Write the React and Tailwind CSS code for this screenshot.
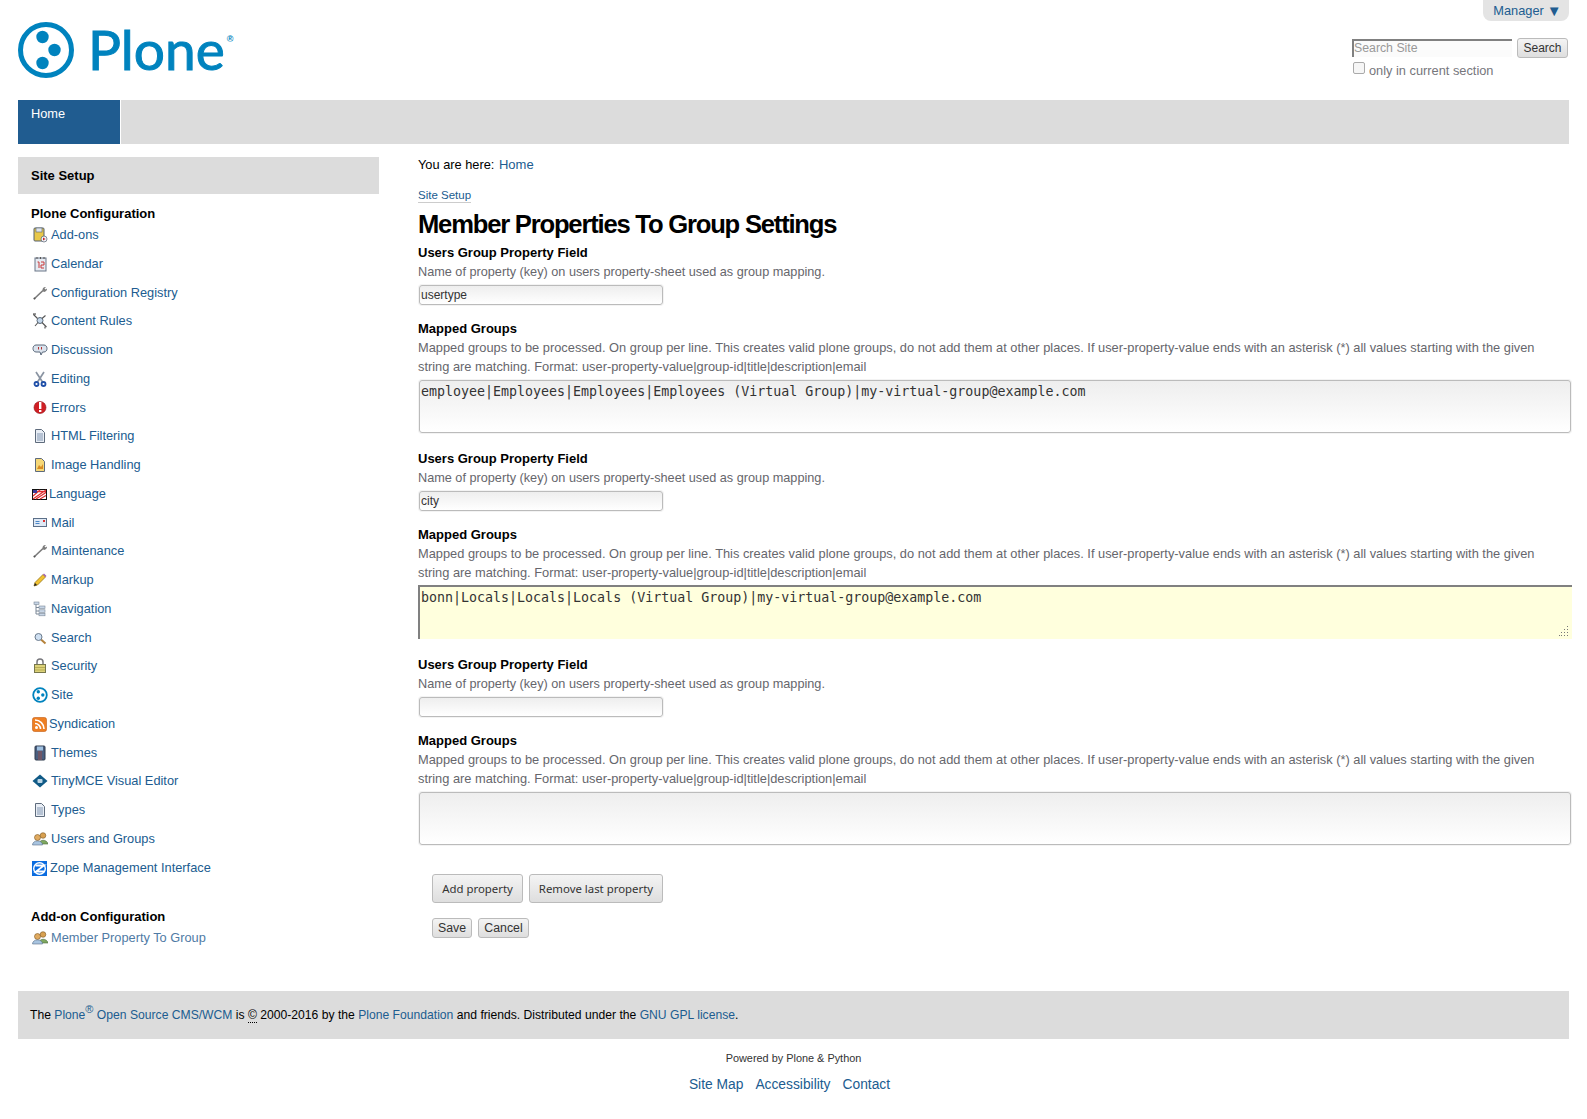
import React from "react";

const sans = "font-['Liberation_Sans',Arial,sans-serif]";

function Icon({ name }) {
  switch (name) {
    case "addons":
      return (
        <svg viewBox="0 0 16 16" className="h-4 w-4">
          <rect x="2" y="1" width="10" height="13" rx="1" fill="#e8c84a" stroke="#55606e" />
          <rect x="4" y="1" width="6" height="4" fill="#dfe5ec" stroke="#55606e" strokeWidth=".6" />
          <circle cx="12" cy="12" r="3" fill="#eef2f7" stroke="#55606e" strokeWidth=".7" />
          <path d="M11 10.500l2.500 1.500-2.500 1.500z" fill="#c8202a" />
        </svg>
      );
    case "calendar":
      return (
        <svg viewBox="0 0 16 16" className="h-4 w-4">
          <rect x="3" y="2" width="11" height="13" fill="#e6ebf2" stroke="#6a7688" />
          <path d="M5 1v2M8.500 1v2M12 1v2" stroke="#555" />
          <path d="M5.500 6h1.500v6M9 6h3v3h-3v3h3" fill="none" stroke="#c93a3a" />
        </svg>
      );
    case "wrench":
      return (
        <svg viewBox="0 0 16 16" className="h-4 w-4">
          <path d="M2 14L11 5.500" stroke="#7a7a7a" strokeWidth="1.600" />
          <path d="M10.500 5.500c-.5-2 1.500-4 3.500-3.500l-1.500 1.500 1 1 1.500-1c.3 2-1.500 3.800-3.500 3.300z" fill="#7c7c7c" />
          <circle cx="2.500" cy="13.500" r="1" fill="#555" />
        </svg>
      );
    case "rules":
      return (
        <svg viewBox="0 0 16 16" className="h-4 w-4">
          <circle cx="8" cy="7.500" r="3" fill="#c3d6ea" stroke="#5a6a7a" />
          <path d="M1.500 1.500l4 4M14.500 14l-4.500-4.500M13.500 2.500l-3.500 3M3 13l3-3.500" stroke="#555" strokeWidth="1.100" />
          <path d="M1 1h3M13 13.500v2" stroke="#333" />
        </svg>
      );
    case "discussion":
      return (
        <svg viewBox="0 0 16 16" className="h-4 w-4">
          <path d="M4 3h8c4 0 4 7 0 7h-1.500l-1.500 3-1-3H4c-4 0-4-7 0-7z" fill="#dbe3ed" stroke="#5c6a7c" />
          <path d="M6.500 5v2.500M9.500 5v2.500" stroke="#b03030" />
        </svg>
      );
    case "editing":
      return (
        <svg viewBox="0 0 16 16" className="h-4 w-4">
          <path d="M4 1l6.500 10M12 1L5.500 11" stroke="#8a94a2" strokeWidth="1.700" />
          <circle cx="4.500" cy="13" r="2" fill="none" stroke="#1f4fa8" strokeWidth="1.800" />
          <circle cx="11.500" cy="13" r="2" fill="none" stroke="#1f4fa8" strokeWidth="1.800" />
        </svg>
      );
    case "errors":
      return (
        <svg viewBox="0 0 16 16" className="h-4 w-4">
          <circle cx="8" cy="7.500" r="6" fill="#d01f24" stroke="#8e1015" strokeWidth=".6" />
          <rect x="7" y="2" width="2.400" height="7" fill="#fff" />
          <rect x="7" y="10" width="2.400" height="2" fill="#fff" />
        </svg>
      );
    case "doc":
      return (
        <svg viewBox="0 0 16 16" className="h-4 w-4">
          <path d="M3.500 1.500h6l3 3v10h-9z" fill="#e9eef5" stroke="#5e6b7c" />
          <path d="M5 6h6M5 8h6M5 10h6M5 12h6" stroke="#8397b2" />
        </svg>
      );
    case "image":
      return (
        <svg viewBox="0 0 16 16" className="h-4 w-4">
          <path d="M3.500 1.500h6l3 3v10h-9z" fill="#f6d878" stroke="#5e6b7c" />
          <path d="M5 12l2-4 2 2 2-3v5z" fill="#d88c24" />
        </svg>
      );
    case "language":
      return (
        <svg viewBox="0 0 16 16" className="h-4 w-4">
          <rect x=".5" y="3.500" width="14" height="10" fill="#fff" stroke="#111" />
          <path d="M1 13L14 4M1 5.500h13M4 13l10-6.500M8 13l6-3.500M1 10l7-6" stroke="#e03030" strokeWidth="1.300" />
          <rect x="1" y="4" width="4" height="3" fill="#3a3a98" />
        </svg>
      );
    case "mail":
      return (
        <svg viewBox="0 0 16 16" className="h-4 w-4">
          <rect x="1.500" y="3.500" width="13" height="8" fill="#dfe9f5" stroke="#5c6f88" />
          <path d="M3.500 6.500h4M3.500 8.500h4" stroke="#4a86c8" />
          <rect x="11" y="5" width="2" height="2" fill="#e03030" />
        </svg>
      );
    case "markup":
      return (
        <svg viewBox="0 0 16 16" className="h-4 w-4">
          <path d="M2 14l1-3.500 8-8 2.500 2.500-8 8z" fill="#f2c230" stroke="#8a6a10" strokeWidth=".7" />
          <path d="M11 2.500l2.500 2.500 1-1-2.500-2.500z" fill="#a05fb0" />
          <path d="M2 14l1-3 2 2z" fill="#222" />
        </svg>
      );
    case "navigation":
      return (
        <svg viewBox="0 0 16 16" className="h-4 w-4">
          <path d="M4 3v10h3M4 6.500h3M4 10h3" fill="none" stroke="#7a8796" />
          <rect x="2" y="1" width="5" height="2.500" fill="#c7d5e6" stroke="#7a8796" strokeWidth=".6" />
          <rect x="7" y="5" width="6" height="2.500" fill="#c7d5e6" stroke="#7a8796" strokeWidth=".6" />
          <rect x="7" y="8.800" width="6" height="2.500" fill="#c7d5e6" stroke="#7a8796" strokeWidth=".6" />
          <rect x="7" y="12.300" width="6" height="2.500" fill="#c7d5e6" stroke="#7a8796" strokeWidth=".6" />
        </svg>
      );
    case "search":
      return (
        <svg viewBox="0 0 16 16" className="h-4 w-4">
          <path d="M9 9.500l4.500 4" stroke="#b5823a" strokeWidth="2" />
          <circle cx="6.500" cy="7" r="3.500" fill="#cfe0f2" stroke="#6a7a8c" />
        </svg>
      );
    case "security":
      return (
        <svg viewBox="0 0 16 16" className="h-4 w-4">
          <path d="M5 7V4a3 3 0 0 1 6 0V7" fill="none" stroke="#77777c" strokeWidth="1.500" />
          <rect x="2.500" y="6.500" width="11" height="8" fill="#dcd27a" stroke="#77774c" />
          <path d="M3 9.500h10M3 12h10" stroke="#b8ad55" />
        </svg>
      );
    case "site":
      return (
        <svg viewBox="0 0 16 16" className="h-4 w-4">
          <circle cx="8" cy="8" r="6.800" fill="none" stroke="#0083be" strokeWidth="1.800" />
          <circle cx="6.300" cy="4.800" r="1.700" fill="#0083be" />
          <circle cx="10.800" cy="8" r="1.700" fill="#0083be" />
          <circle cx="6.300" cy="11.200" r="1.700" fill="#0083be" />
        </svg>
      );
    case "rss":
      return (
        <svg viewBox="0 0 16 16" className="h-4 w-4">
          <rect x=".5" y="1.500" width="14" height="14" rx="2" fill="#ee7f22" stroke="#c25a10" strokeWidth=".6" />
          <circle cx="4.500" cy="11.500" r="1.500" fill="#fff" />
          <path d="M3 7.500a5.500 5.500 0 0 1 5.500 5.500M3 4a9 9 0 0 1 9 9" fill="none" stroke="#fff" strokeWidth="1.600" />
        </svg>
      );
    case "themes":
      return (
        <svg viewBox="0 0 16 16" className="h-4 w-4">
          <rect x="3" y="1" width="10" height="14" rx="1" fill="#4a5f80" stroke="#2f3a4c" />
          <rect x="5" y="1.500" width="6" height="4" fill="#9fc0e0" />
          <rect x="6" y="6" width="4" height="9" fill="#6e5666" />
        </svg>
      );
    case "tiny":
      return (
        <svg viewBox="0 0 16 16" className="h-4 w-4">
          <path d="M8 1.500L15.500 8 8 14.500.5 8z" fill="#105a86" />
          <rect x="5.500" y="6" width="5" height="4" rx="1" fill="#bcd6e6" />
        </svg>
      );
    case "users":
      return (
        <svg viewBox="0 0 16 16" className="h-4 w-4">
          <circle cx="11" cy="4.500" r="2.800" fill="#d8a050" stroke="#7a5520" strokeWidth=".6" />
          <path d="M7 13c0-5 8-5 9 0z" fill="#7fa860" stroke="#4a6a3a" strokeWidth=".6" />
          <circle cx="5.500" cy="6.500" r="3" fill="#e0aa60" stroke="#7a5520" strokeWidth=".6" />
          <path d="M.5 14c0-5.500 10-5.500 10 0z" fill="#a8c4e0" stroke="#5a7088" strokeWidth=".6" />
        </svg>
      );
    case "zope":
      return (
        <svg viewBox="0 0 16 16" className="h-4 w-4">
          <rect y="1" width="15" height="15" fill="#0a6ce0" />
          <circle cx="7.500" cy="8.500" r="5.800" fill="none" stroke="#fff" strokeWidth="1.400" />
          <path d="M3.500 5.500h8.500L4 11.500h8.500" fill="none" stroke="#fff" strokeWidth="1.800" />
        </svg>
      );
    default:
      return null;
  }
}

const configItems = [
  { label: "Add-ons", icon: "addons" },
  { label: "Calendar", icon: "calendar" },
  { label: "Configuration Registry", icon: "wrench" },
  { label: "Content Rules", icon: "rules" },
  { label: "Discussion", icon: "discussion" },
  { label: "Editing", icon: "editing", gap: "gap-[3px]" },
  { label: "Errors", icon: "errors" },
  { label: "HTML Filtering", icon: "doc" },
  { label: "Image Handling", icon: "image" },
  { label: "Language", icon: "language", gap: "gap-[1px]" },
  { label: "Mail", icon: "mail" },
  { label: "Maintenance", icon: "wrench" },
  { label: "Markup", icon: "markup" },
  { label: "Navigation", icon: "navigation" },
  { label: "Search", icon: "search" },
  { label: "Security", icon: "security" },
  { label: "Site", icon: "site" },
  { label: "Syndication", icon: "rss", gap: "gap-[1px]" },
  { label: "Themes", icon: "themes" },
  { label: "TinyMCE Visual Editor", icon: "tiny" },
  { label: "Types", icon: "doc" },
  { label: "Users and Groups", icon: "users" },
  { label: "Zope Management Interface", icon: "zope", gap: "gap-[2px]" },
];

const mappedHelp =
  "Mapped groups to be processed. On group per line. This creates valid plone groups, do not add them at other places. If user-property-value ends with an asterisk (*) all values starting with the given string are matching. Format: user-property-value|group-id|title|description|email";

const groups = [
  { field: "usertype", mapped: "employee|Employees|Employees|Employees (Virtual Group)|my-virtual-group@example.com" },
  { field: "city", mapped: "bonn|Locals|Locals|Locals (Virtual Group)|my-virtual-group@example.com", focused: true },
  { field: "", mapped: "" },
];

function SideLink({ item }) {
  return (
    <li className={`flex h-[28.760px] items-start ${item.gap || "gap-[3px]"} pl-[15px] text-[12.800px] leading-[15px] text-[#205c90]`}>
      <Icon name={item.icon} />
      <a href="#">{item.label}</a>
    </li>
  );
}

function GroupFields({ group }) {
  const inputBox =
    "block rounded-[3px] border border-[#bbb] bg-gradient-to-b from-[#eeeeee] to-white text-[#333] shadow-[0_0_0_1px_#f3f3f3] outline-none";
  return (
    <div className="mb-[16px]">
      <div className="text-[13px] font-bold leading-[19px] text-black">Users Group Property Field</div>
      <div className="pt-[1px] text-[12.700px] leading-[18px] text-[#66666c]">Name of property (key) on users property-sheet used as group mapping.</div>
      <input
        readOnly
        value={group.field}
        className={`${inputBox} mx-[1px] mt-[4px] mb-[14px] h-[20px] w-[244px] px-[1px] text-[12px] leading-[18px] ${sans}`}
      />
      <div className="text-[13px] font-bold leading-[19px] text-black">Mapped Groups</div>
      <div className="w-[1140px] text-[12.840px] leading-[19px] text-[#66666c]">{mappedHelp}</div>
      <div className={`relative ${group.focused ? "mt-[3px] mb-[1px]" : "mt-[4px]"}`}>
        <textarea
          readOnly
          value={group.mapped}
          className={
            group.focused
              ? "block h-[54px] w-[1154px] resize-none border-t-2 border-l-2 border-[#808080] bg-[#ffffdd] pt-[3px] pl-[1px] font-['DejaVu_Sans_Mono',monospace] text-[13.300px] leading-[16px] text-[#333] outline-none"
              : `${inputBox} ml-[1px] h-[53px] w-[1152px] resize-none px-[1px] pt-[3px] font-['DejaVu_Sans_Mono',monospace] text-[13.300px] leading-[16px]`
          }
        />
        {group.focused && (
          <svg viewBox="0 0 10 10" className="absolute right-[3px] bottom-[3px] h-[10px] w-[10px]" fill="#777">
            <rect x="8" y="0" width="1" height="1" />
            <rect x="5" y="3" width="1" height="1" />
            <rect x="8" y="3" width="1" height="1" />
            <rect x="2" y="6" width="1" height="1" />
            <rect x="5" y="6" width="1" height="1" />
            <rect x="8" y="6" width="1" height="1" />
            <rect x="0" y="9" width="1" height="1" />
            <rect x="2" y="9" width="1" height="1" />
            <rect x="5" y="9" width="1" height="1" />
            <rect x="8" y="9" width="1" height="1" />
          </svg>
        )}
      </div>
    </div>
  );
}

export default function App() {
  const btn =
    "rounded-[3px] border border-[#bbb] bg-gradient-to-b from-[#f4f4f4] to-[#dedede] text-[#333]";
  return (
    <div className={`relative h-[1119px] overflow-hidden bg-white px-[18px] ${sans}`}>
      {/* Header */}
      <header className="relative h-[100px]">
        <a href="#" className="absolute top-0 right-0 flex h-[21px] w-[86px] items-center justify-center gap-[3px] rounded-b-lg bg-[#e4e4e4] pt-[1px] pl-[3px] text-[12.800px] text-[#205c90]">
          Manager <span className="-mt-[2px] text-[15px] leading-[15px]">▼</span>
        </a>
        <div className="flex items-start pt-[22px]">
          <svg viewBox="0 0 56 56" className="h-[56px] w-[56px]">
            <circle cx="28" cy="28" r="25.500" fill="none" stroke="#0083be" strokeWidth="5" />
            <circle cx="24.500" cy="15" r="6.200" fill="#0083be" />
            <circle cx="36.500" cy="28" r="6.200" fill="#0083be" />
            <circle cx="24.500" cy="41" r="6.200" fill="#0083be" />
          </svg>
          <span className="ml-[14px] -mt-[11px] font-['Lato',sans-serif] text-[55px] leading-[76px] text-[#0083be] [-webkit-text-stroke:1px_#0083be]">Plone</span>
          <span className="ml-[2px] mt-[12px] text-[9px] font-bold leading-[10px] text-[#0083be]">®</span>
        </div>
        <div className="absolute top-[38px] right-0 w-[217px]">
          <div className="flex items-start">
            <input
              readOnly
              placeholder="Search Site"
              className="mt-[1px] h-[18px] w-[160px] border-t-2 border-l-2 border-[#808080] bg-[#fbfbfb] pb-[1px] text-[12.300px] outline-none placeholder:text-[#999]"
            />
            <button className={`ml-[5px] h-[20px] w-[51px] text-[12px] ${btn}`}>Search</button>
          </div>
          <label className="mt-[4px] flex items-start text-[12.800px] leading-[16px] text-[#76767c]">
            <span className="ml-[1px] h-[12px] w-[12px] rounded-[2px] border border-[#aaa] bg-[#f6f6f6]"></span>
            <span className="ml-[4px] mt-[1px]">only in current section</span>
          </label>
        </div>
      </header>

      {/* Global nav */}
      <nav className="flex h-[44px] bg-[#dcdcdc]">
        <a href="#" className="w-[102px] bg-[#205c90] pt-[5px] pl-[13px] text-[12.800px] leading-[17px] text-white">Home</a>
        <div className="w-[1px] bg-white"></div>
      </nav>

      <div className="mt-[13px] flex h-[834px] items-start">
        {/* Sidebar */}
        <aside className="w-[361px] shrink-0">
          <div className="h-[37px] bg-[#dcdcdc] pl-[13px] text-[13px] font-bold leading-[37px] text-black">Site Setup</div>
          <div className="mt-[12px] pl-[13px] text-[13px] font-bold leading-[15px] text-black">Plone Configuration</div>
          <ul className="mt-[6px] -ml-[1px]">
            {configItems.map((item) => (
              <SideLink key={item.label} item={item} />
            ))}
          </ul>
          <div className="mt-[21px] pl-[13px] text-[13px] font-bold leading-[15px] text-black">Add-on Configuration</div>
          <div className="mt-[6px] -ml-[1px] flex items-start gap-[3px] pl-[15px] text-[12.800px] leading-[15px] text-[#4f7ba5]">
            <Icon name="users" />
            <a href="#">Member Property To Group</a>
          </div>
        </aside>

        {/* Content */}
        <main className="ml-[39px] w-[1154px] shrink-0">
          <div className="text-[12.800px] leading-[15px] text-black">
            You are here: <a href="#" className="ml-[1px] text-[13px] text-[#205c90]">Home</a>
          </div>
          <a href="#" className="mt-[16px] inline-block border-b border-[#ccc] text-[11.500px] leading-[14px] text-[#205c90]">Site Setup</a>
          <h1 className="mt-[2px] text-[25.600px] font-bold leading-[33px] tracking-[-1.200px] text-black">Member Properties To Group Settings</h1>
          <div className="mt-[2px]">
            {groups.map((g, i) => (
              <GroupFields key={i} group={g} />
            ))}
          </div>
          <div className="ml-[14px] mt-[29px] flex gap-[6px] font-['Noto_Sans',sans-serif] text-[11.400px]">
            <button className={`h-[29px] w-[91px] ${btn}`}>Add property</button>
            <button className={`h-[29px] w-[134px] ${btn}`}>Remove last property</button>
          </div>
          <div className="ml-[14px] mt-[15px] flex gap-[6px] text-[12.300px]">
            <button className={`h-[20px] w-[40px] ${btn}`}>Save</button>
            <button className={`h-[20px] w-[51px] ${btn}`}>Cancel</button>
          </div>
        </main>
      </div>

      {/* Footer */}
      <footer>
        <div className="flex h-[48px] items-center bg-[#dcdcdc] pl-[12px] text-[12.150px] text-black">
          <span>
            The <a href="#" className="text-[#205c90]">Plone<sup className="text-[11px]">®</sup> Open Source CMS/WCM</a> is <abbr className="border-b border-dotted border-black no-underline">©</abbr> 2000-2016 by the <a href="#" className="text-[#205c90]">Plone Foundation</a> and friends. Distributed under the <a href="#" className="text-[#205c90]">GNU GPL license</a>.
          </span>
        </div>
        <div className="mt-[12px] text-center text-[10.900px] leading-[14px] text-[#333]">Powered by Plone &amp; Python</div>
        <div className="mt-[12px] flex justify-center gap-[12px] pr-[8px] text-[13.800px] leading-[16px] text-[#205c90]">
          <a href="#">Site Map</a>
          <a href="#">Accessibility</a>
          <a href="#">Contact</a>
        </div>
      </footer>
    </div>
  );
}
